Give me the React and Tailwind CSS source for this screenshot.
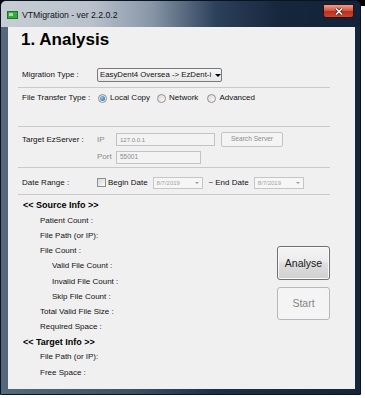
import React from 'react';

const Sep = () => <div className="-ml-[4px] h-px w-[312px] shrink-0 bg-[#c9c9c9]" />;

const Radio = ({ checked, label, className = '' }) => (
  <div className={`flex items-center ${className}`}>
    <span className="flex h-[9px] w-[9px] items-center justify-center rounded-full border border-[#8e8f8f] bg-[linear-gradient(135deg,#d8d8d8,#fbfbfb)]">
      {checked && <span className="h-[5px] w-[5px] rounded-full bg-[radial-gradient(circle_at_35%_35%,#8cc8f0,#1d5ea6)]" />}
    </span>
    <span className="ml-[3px]">{label}</span>
  </div>
);

const DateBox = ({ className = '' }) => (
  <div className={`flex h-[12px] w-[50px] items-center border border-[#c6c6c6] bg-[#f6f6f6] pl-[3px] text-[6px] text-[#a3a3a3] ${className}`}>
    <span className="flex-1">8/7/2019</span>
    <span className="mr-[3px] h-0 w-0 border-x-[2px] border-t-[2px] border-x-transparent border-t-[#9a9a9a]" />
  </div>
);

const rows = [
  { text: '<< Source Info >>', level: 0 },
  { text: 'Patient Count :', level: 1 },
  { text: 'File Path (or IP):', level: 1 },
  { text: 'File Count :', level: 1 },
  { text: 'Valid File Count :', level: 2 },
  { text: 'Invalid File Count :', level: 2 },
  { text: 'Skip File Count :', level: 2 },
  { text: 'Total Valid File Size :', level: 1 },
  { text: 'Required Space :', level: 1 },
  { text: '<< Target Info >>', level: 0 },
  { text: 'File Path (or IP):', level: 1 },
  { text: 'Free Space :', level: 1 },
];

const indent = ['ml-[1px] text-[9px] font-bold text-black', 'ml-[18px]', 'ml-[30px]'];

export default function App() {
  return (
    <div className="h-[398px] w-[365px] overflow-hidden bg-[linear-gradient(#000_0,#000_6px,#fff_6px)] font-['Liberation_Sans',Arial,sans-serif] text-[8px] leading-none text-[#111]">
      <div className="flex h-[395px] w-[361px] flex-col rounded-t-[6px] border border-[#0a1420] bg-[linear-gradient(90deg,#56687b_0%,#3f5268_35%,#1d2f46_60%,#15253a_100%)]">
        {/* title bar */}
        <div className="relative flex h-[26px] shrink-0 items-center rounded-t-[5px] bg-[linear-gradient(90deg,#c6cdd4_0%,#b9c2cc_25%,#8796a7_42%,#2c405a_60%,#16263c_78%,#12223a_100%)] pl-[6px] pt-[2px]">
          <svg width="11" height="8" viewBox="0 0 11 8">
            <rect x="0.5" y="0.5" width="10" height="7" fill="#3aa83f" stroke="#23712a" />
            <rect x="2" y="2" width="4" height="3" fill="#9be29a" />
          </svg>
          <span className="ml-[4px] text-[8.7px] text-[#111]">VTMigration - ver 2.2.0.2</span>
          <div className="absolute left-[322px] top-[3px] flex h-[14px] w-[31px] items-center justify-center rounded-b-[3px] border border-[#3b0d08] bg-[linear-gradient(#e8a093,#d15a45_45%,#bb2f1b_55%,#c9492f)]">
            <svg width="10" height="9" viewBox="0 0 10 9">
              <path d="M2 1.5 L8 7.5 M8 1.5 L2 7.5" stroke="#4a1a14" strokeWidth="3" />
              <path d="M2 1.5 L8 7.5 M8 1.5 L2 7.5" stroke="#fff" strokeWidth="1.6" />
            </svg>
          </div>
        </div>

        {/* client area */}
        <div className="flex flex-1 pb-[5px] pl-[7px] pr-[5px]">
          <div className="flex flex-1 flex-col bg-[#f0f0f0] pl-[14px]">
            <div className="-ml-[1px] mt-[3px] h-[20px] text-[17px] font-bold leading-[20px] text-black">1. Analysis</div>

            <div className="mt-[18px] flex h-[14px] shrink-0 items-center">
              <span className="w-[75px]">Migration Type :</span>
              <div className="flex h-[14px] w-[125px] items-center rounded-[2px] border border-[#7a7a7a] bg-[linear-gradient(#f6f6f6,#e6e6e6)] pl-[2px]">
                <span className="w-[113px] overflow-hidden whitespace-nowrap text-[7.8px]">EasyDent4 Oversea -&gt; EzDent-i</span>
                <span className="ml-[2px] h-0 w-0 border-x-[3px] border-t-[3px] border-x-transparent border-t-black" />
              </div>
            </div>

            <div className="mt-[5px]"><Sep /></div>

            <div className="mt-[3px] flex h-[14px] shrink-0 items-center">
              <span className="w-[76px]">File Transfer Type :</span>
              <Radio checked label="Local Copy" />
              <Radio label="Network" className="ml-[7px]" />
              <Radio label="Advanced" className="ml-[9px]" />
            </div>

            <div className="mt-[21px]"><Sep /></div>

            <div className="mt-[5px] flex h-[15px] shrink-0 items-center">
              <span className="w-[75px]">Target EzServer :</span>
              <span className="w-[19px] text-[#8a8a8a]">IP</span>
              <div className="flex h-[13px] w-[99px] items-center border border-[#c3c3c3] bg-[#f3f3f3] pl-[3px] text-[6px] text-[#8a8a8a]">127.0.0.1</div>
              <div className="ml-[6px] flex h-[15px] w-[62px] items-center justify-center rounded-[2px] border border-[#c4c4c4] bg-[#f4f4f4] text-[6.6px] text-[#8c8c8c]">Search Server</div>
            </div>

            <div className="mt-[3px] flex h-[14px] shrink-0 items-center">
              <span className="w-[75px]" />
              <span className="w-[19px] text-[#8a8a8a]">Port</span>
              <div className="flex h-[13px] w-[85px] items-center border border-[#c3c3c3] bg-[#f3f3f3] pl-[3px] text-[6.5px] text-[#8a8a8a]">55001</div>
            </div>

            <div className="mt-[3px]"><Sep /></div>

            <div className="mt-[8px] flex h-[13px] shrink-0 items-center">
              <span className="w-[75px]">Date Range :</span>
              <span className="h-[9px] w-[9px] border border-[#8e8f8f] bg-[linear-gradient(135deg,#d8d8d8,#fafafa)]" />
              <span className="ml-[2px]">Begin Date</span>
              <DateBox className="ml-[5px]" />
              <span className="ml-[6px]">~</span>
              <span className="ml-[2px]">End Date</span>
              <DateBox className="ml-[5px]" />
            </div>

            <div className="mt-[5px]"><Sep /></div>

            <div className="mt-[3px] flex">
              <div className="flex flex-col">
                {rows.map((r, i) => (
                  <div key={i} className="flex h-[15.2px] items-center">
                    <span className={indent[r.level]}>{r.text}</span>
                  </div>
                ))}
              </div>
              <div className="ml-auto mr-[25px] flex flex-col pt-[48px]">
                <div className="flex h-[34px] w-[53px] items-center justify-center rounded-[3px] border border-[#707070] bg-[linear-gradient(#f4f4f4,#ececec_45%,#dedede_52%,#d0d0d0)] text-[10.5px] text-[#1a1a1a] shadow-[inset_0_0_0_1px_#fafafa]">Analyse</div>
                <div className="mt-[7px] flex h-[33px] w-[53px] items-center justify-center rounded-[3px] border border-[#b5b9bc] bg-[#f4f4f4] text-[10.5px] text-[#858585]">Start</div>
              </div>
            </div>
          </div>
        </div>
      </div>
    </div>
  );
}
